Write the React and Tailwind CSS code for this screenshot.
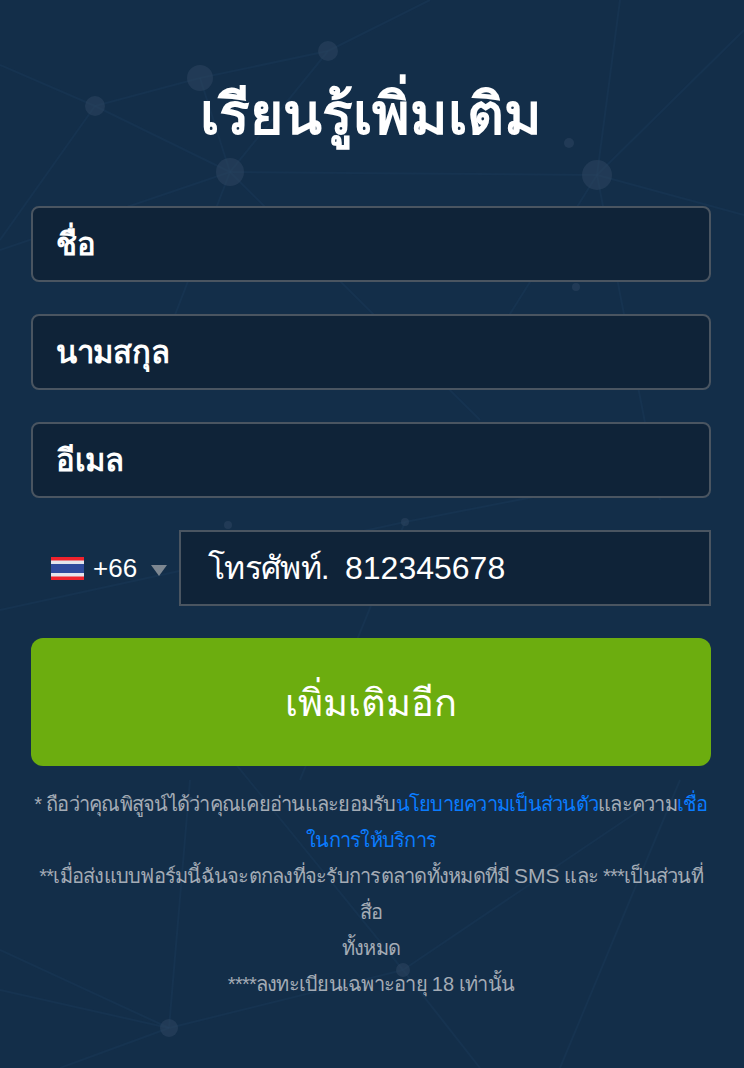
const font = { fontFamily: '"Liberation Sans", "Noto Sans", sans-serif' };

const nodes = [
  [200, 78, 13], [95, 106, 10], [328, 51, 10], [230, 172, 14], [597, 175, 15], [569, 143, 5],
  [576, 287, 4], [502, 327, 3], [405, 522, 4], [228, 525, 4], [169, 1028, 9], [403, 970, 7], [190, 800, 3],
];

const lines = [
  [95, 106, 200, 78], [200, 78, 328, 51], [328, 51, 430, 0], [95, 106, 230, 172], [200, 78, 230, 172],
  [230, 172, 597, 175], [597, 175, 744, 30], [597, 175, 744, 215], [0, 65, 95, 106], [95, 106, 0, 240],
  [230, 172, 0, 250], [230, 172, 150, 380], [328, 51, 230, 172], [230, 172, 480, 420], [597, 175, 620, 0],
  [597, 175, 500, 330], [597, 175, 660, 500], [0, 610, 405, 522], [405, 522, 620, 480], [405, 522, 300, 780],
  [169, 1028, 403, 970], [169, 1028, 0, 990], [169, 1028, 190, 780], [403, 970, 200, 720], [403, 970, 480, 1068],
  [403, 970, 640, 810], [169, 1028, 60, 1068], [0, 950, 169, 1028], [560, 1068, 680, 780],
];

function NetworkBg() {
  return (
    <svg className="absolute inset-0" width="744" height="1068" viewBox="0 0 744 1068" fill="none">
      {lines.map((l, i) => (
        <line key={i} x1={l[0]} y1={l[1]} x2={l[2]} y2={l[3]} stroke="#1f4060" strokeWidth="2" opacity="0.3" />
      ))}
      {nodes.map((n, i) => (
        <circle key={i} cx={n[0]} cy={n[1]} r={n[2]} fill="#2d4660" opacity="0.55" />
      ))}
    </svg>
  );
}

function Field({ label }) {
  return (
    <div className="h-[76px] w-full flex items-center pl-[23px] pt-0.5 bg-[#0f2338] border-2 border-[#4a5561] rounded-lg text-white text-[31px] tracking-[-0.3px] font-bold">
      {label}
    </div>
  );
}

function ThaiFlag() {
  return (
    <svg width="33" height="23" viewBox="0 0 33 23">
      <rect width="33" height="23" fill="#f0222c" />
      <rect y="3.5" width="33" height="16" fill="#e4e4ec" />
      <rect y="7" width="33" height="9" fill="#2f4a9c" />
    </svg>
  );
}

export default function App() {
  return (
    <div className="relative w-[744px] h-[1068px] overflow-hidden bg-[#132e49]" style={font}>
      <NetworkBg />
      <div className="relative pl-[31px] pr-[33px]">
        <h1 className="pt-[72px] h-[206px] text-center text-white text-[57px] leading-[84px] font-bold">เรียนรู้เพิ่มเติม</h1>
        <div className="flex flex-col gap-8">
          <Field label="ชื่อ" />
          <Field label="นามสกุล" />
          <Field label="อีเมล" />
          <div className="flex h-[76px]">
            <div className="w-[148px] flex items-center pl-5 text-white text-[26px]">
              <ThaiFlag />
              <span className="ml-[9px]">+66</span>
              <span className="ml-[14px] mt-1 w-0 h-0 border-x-8 border-x-transparent border-t-[11px] border-t-[#7d8791]"></span>
            </div>
            <div className="flex-1 flex items-center pl-[27px] bg-[#0f2338] border-2 border-[#4a5561] text-white text-[32px]">
              <span className="tracking-[-0.7px]">โทรศัพท์.</span>
              <span className="ml-4">812345678</span>
            </div>
          </div>
          <button className="h-[128px] w-full pt-0.5 rounded-xl bg-[#6cad0f] text-white text-[38px]">เพิ่มเติมอีก</button>
        </div>
        <div className="mt-5 -mx-2 text-center text-[20px] leading-9 tracking-[-0.75px] text-[#a3abb5]">
          <p>
            * ถือว่าคุณพิสูจน์ได้ว่าคุณเคยอ่านและยอมรับ<span className="text-[#0a7cff]">นโยบายความเป็นส่วนตัว</span>และความ<span className="text-[#0a7cff]">เชื่อ<br />ในการให้บริการ</span>
          </p>
          <p>
            **เมื่อส่งแบบฟอร์มนี้ฉันจะตกลงที่จะรับการตลาดทั้งหมดที่มี <span className="text-[21px] tracking-normal">SMS</span> และ ***เป็นส่วนที่<br />สื่อ
          </p>
          <p>ทั้งหมด</p>
          <p>****ลงทะเบียนเฉพาะอายุ <span className="tracking-normal">18</span> เท่านั้น</p>
        </div>
      </div>
    </div>
  );
}
